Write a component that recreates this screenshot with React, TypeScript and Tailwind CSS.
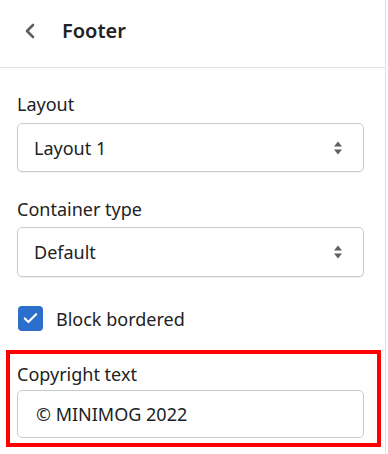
import { ChevronLeft, Check } from "lucide-react";

function SelectArrows() {
  return (
    <svg width="10" height="16" viewBox="0 0 10 16" className="text-[#5c5f62]">
      <path d="M5 1.5 L9 6.5 H1 Z" fill="currentColor" />
      <path d="M5 14.5 L9 9.5 H1 Z" fill="currentColor" />
    </svg>
  );
}

function Select({ value, height }: { value: string; height: string }) {
  return (
    <div
      className={`flex w-[347px] items-center justify-between rounded-[5px] border border-[#c9cccf] bg-white pl-[16px] pr-[20px] shadow-[0_1px_0_rgba(0,0,0,0.05)] ${height}`}
    >
      <span className="text-[18px] leading-6 text-[#202223]">{value}</span>
      <SelectArrows />
    </div>
  );
}

export default function App() {
  return (
    <div className="h-[454px] w-[388px] bg-white font-['Noto_Sans','Open_Sans',sans-serif] text-[#202223]">
      <div className="h-full w-[386px] border-r border-[#e1e3e5]">
        <div className="flex h-[68px] items-center border-b border-[#e1e3e5] pb-[6px]">
          <ChevronLeft className="ml-[18px] h-[24px] w-[24px] text-[#5c5f62]" strokeWidth={2.6} />
          <h1 className="ml-[20px] text-[20px] font-semibold leading-6 text-[#202223]">Footer</h1>
        </div>

        <div className="pl-[17px]">
          <div className="mt-[24px] text-[18px] leading-6">Layout</div>
          <div className="mt-[7px]">
            <Select value="Layout 1" height="h-[49px]" />
          </div>

          <div className="mt-[25px] text-[18px] leading-6">Container type</div>
          <div className="mt-[6px]">
            <Select value="Default" height="h-[50px]" />
          </div>

          <div className="mt-[29px] flex items-center">
            <div className="ml-[1px] flex h-[25px] w-[25px] items-center justify-center rounded-[4px] bg-[#2c6ecb]">
              <Check className="h-[17px] w-[17px] text-white" strokeWidth={3} />
            </div>
            <span className="ml-[13px] text-[18px] leading-6">Block bordered</span>
          </div>
        </div>

        <div className="ml-[6px] mt-[19px] w-[375px] border-4 border-[#ff0000] pb-[5px] pl-[7px] pr-[13px] pt-[8px]">
          <div className="text-[18px] leading-6">Copyright text</div>
          <div className="mt-[4px] flex h-[48px] items-center rounded-[5px] border border-[#c9cccf] bg-white pl-[18px]">
            <span className="text-[18px] leading-6">© MINIMOG 2022</span>
          </div>
        </div>
      </div>
    </div>
  );
}
